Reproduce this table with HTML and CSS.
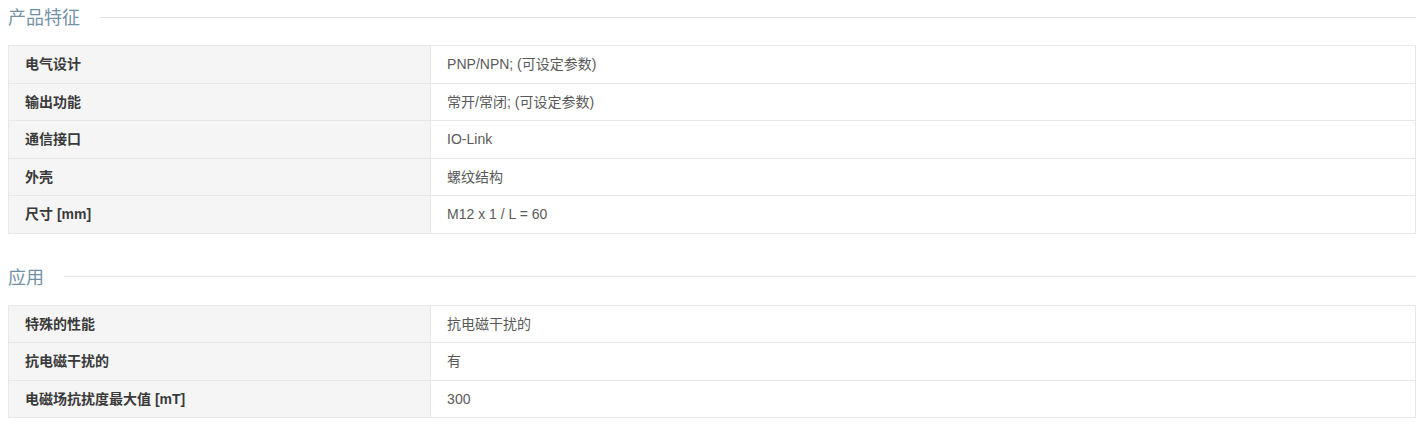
FILE: index.html
```html
<!DOCTYPE html>
<html lang="zh">
<head>
<meta charset="utf-8">
<link rel="stylesheet" href="styles.css">
</head>
<body>
<section class="block">
  <h2 class="heading"><span class="heading-text">产品特征</span><span class="heading-line"></span></h2>
  <table class="spec">
    <tr><th>电气设计</th><td>PNP/NPN; (可设定参数)</td></tr>
    <tr><th>输出功能</th><td>常开/常闭; (可设定参数)</td></tr>
    <tr><th>通信接口</th><td>IO-Link</td></tr>
    <tr><th>外壳</th><td>螺纹结构</td></tr>
    <tr><th>尺寸 [mm]</th><td>M12 x 1 / L = 60</td></tr>
  </table>
</section>
<section class="block block-next">
  <h2 class="heading"><span class="heading-text">应用</span><span class="heading-line"></span></h2>
  <table class="spec">
    <tr><th>特殊的性能</th><td>抗电磁干扰的</td></tr>
    <tr><th>抗电磁干扰的</th><td>有</td></tr>
    <tr><th>电磁场抗扰度最大值 [mT]</th><td>300</td></tr>
  </table>
</section>
</body>
</html>
```
FILE: styles.css
```css
html, body {
  margin: 0;
  padding: 0;
  background: #fff;
}
body {
  padding: 0 6px 0 8px;
  font-family: "Liberation Sans", "Noto Sans CJK SC", sans-serif;
  font-size: 14px;
  color: #555;
}
.block-next {
  margin-top: 26px;
}
.heading {
  display: flex;
  align-items: center;
  height: 36px;
  margin: 0;
  font-weight: normal;
}
.heading-text {
  font-size: 18px;
  color: #7391a6;
  line-height: 36px;
}
.heading-line {
  flex: 1;
  height: 1px;
  background: #e4e4e4;
  margin-left: 20px;
  margin-top: -2px;
}
.spec {
  width: 100%;
  margin-top: 9px;
  border-collapse: collapse;
  border: 1px solid #e8e8e8;
}
.spec th, .spec td {
  border: 1px solid #e8e8e8;
  padding: 9px 16px;
  line-height: 18.5px;
  text-align: left;
  vertical-align: middle;
}
.spec th {
  width: 30%;
  background: #f5f5f5;
  font-weight: bold;
  color: #3a3a3a;
}
.spec td {
  color: #5a5a5a;
}
```
